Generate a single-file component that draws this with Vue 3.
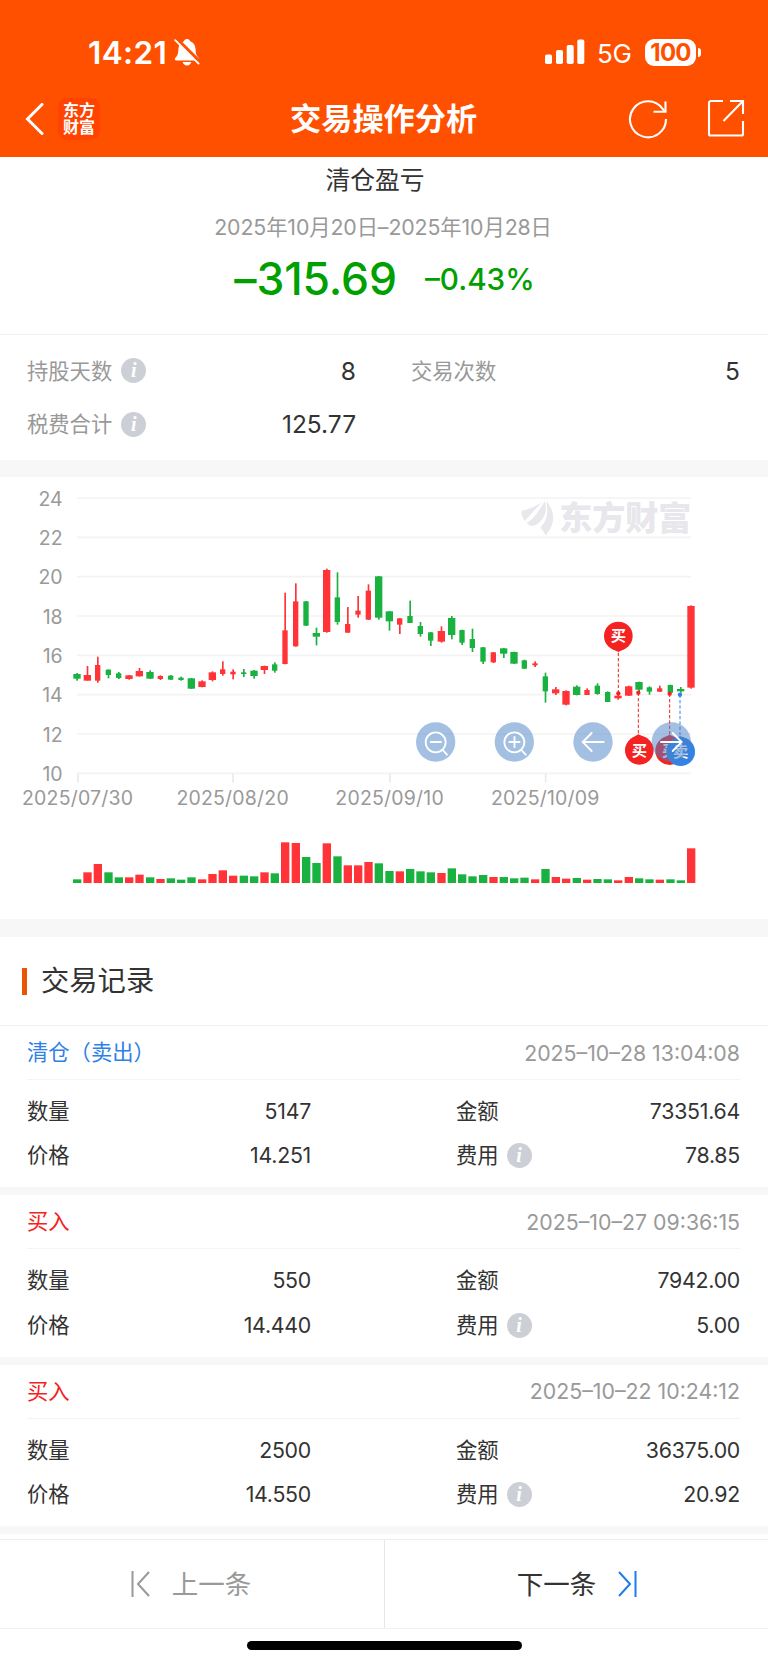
<template>
  <div class="page">
    <header class="header">
      <div class="status">
        <span class="clock">14:21</span>
        <svg class="bell" viewBox="0 0 26 28">
          <path
            d="M13 1c1.9 0 2.8 1 3.1 2.3 3.6 1.2 5.3 4.3 5.5 8.2.2 5 1.4 6.6 3.2 8.4.9 1.2.2 2.6-1.1 2.6H2.3c-1.3 0-2-1.4-1.1-2.6 1.8-1.8 3-3.4 3.2-8.4.2-3.900 1.900-7 5.500-8.200C10.200 2 11.100 1 13 1zM8.700 24h8.600c-.5 2.200-2.200 3.400-4.300 3.400S9.200 26.200 8.700 24z"
            fill="#fff"
          />
          <path d="M2 .6 26 24.400" stroke="#ff5000" stroke-width="4" />
          <path d="M1.200 2.200 24.600 25.600" stroke="#fff" stroke-width="1.900" stroke-linecap="round" />
        </svg>
        <svg class="signal" viewBox="0 0 40 26">
          <rect x="0" y="15.500" width="7" height="9.500" rx="1.800" />
          <rect x="11" y="11" width="7" height="14" rx="1.800" />
          <rect x="21.700" y="6" width="7" height="19" rx="1.800" />
          <rect x="32.300" y="0.500" width="7" height="24.500" rx="1.800" />
        </svg>
        <span class="network">5G</span>
        <span class="battery">100</span>
        <span class="nub"></span>
      </div>
      <div class="navbar">
        <svg class="back" viewBox="0 0 20 32">
          <path d="M17 1.500 2.500 16 17 30.500" />
        </svg>
        <div class="logo"><span>东方</span><span>财富</span></div>
        <h1 class="title">交易操作分析</h1>
        <svg class="refresh" viewBox="0 0 40 40">
          <path d="M38 20A18 18 0 1 1 34.800 10L36.500 12.500" />
          <path d="M37.500 2.500v10.300H25.500" />
        </svg>
        <svg class="share" viewBox="0 0 38 38">
          <path d="M16 2H4a2 2 0 0 0-2 2v31a1.500 1.500 0 0 0 1.500 1.500h31A1.500 1.500 0 0 0 36 35V22" />
          <path d="M23 2h13v13M36 2 16.500 22" />
        </svg>
      </div>
    </header>

    <section class="summary">
      <h2 class="summaryTitle">清仓盈亏</h2>
      <p class="period">2025年10月20日–2025年10月28日</p>
      <div class="profit">
        <span class="amount">–315.69</span>
        <span class="rate">–0.43%</span>
      </div>
    </section>

    <section class="stats">
      <div v-for="s in stats" :key="s.label" class="stat">
        <span class="statLabel">{{ s.label }}</span>
        <i v-if="s.info" class="info">i</i>
        <span class="statValue">{{ s.value }}</span>
      </div>
    </section>

    <section class="chart">
      <svg class="plot" viewBox="0 21 2304 1326">
        <g v-for="n in 8" :key="'y' + n">
          <line class="grid" x1="231" x2="2073" :y1="n * 118 - 34" :y2="n * 118 - 34" />
          <text class="axis" x="188" :y="n * 118 - 11" text-anchor="end">{{ 26 - n * 2 }}</text>
        </g>
        <g v-for="d in dates" :key="d.label">
          <line class="tick" :x1="d.x" :x2="d.x" y1="910" y2="938" />
          <text class="axis date" :x="d.x - 1" y="1006" text-anchor="middle">{{ d.label }}</text>
        </g>

        <g class="watermark">
          <path d="M1565 122c18-2 38-12 60-24-16 14-30 32-50 55-8-8-12-20-10-31z" />
          <path d="M1581 158c20-10 36-36 53-64 8 26 2 50-22 68-12 8-24 8-31-4z" />
          <path d="M1638 94c20 20 26 46 18 70-4 12-12 22-19 33-4-10-9-18-16-24 20-20 26-46 17-79z" />
          <text x="1678" y="181">东方财富</text>
        </g>

        <g v-for="(c, i) in candles" :key="i" :class="c[0] ? 'up' : 'down'">
          <rect :x="center(i) - 2" :y="c[1]" width="5" :height="c[4] - c[1]" />
          <rect
            :x="center(i) - bodyWidth(i) / 2"
            :y="c[2]"
            :width="bodyWidth(i)"
            :height="c[3] - c[2]"
          />
          <rect :x="center(i) - 12" :y="1239 - c[5]" width="25" :height="c[5]" />
        </g>

        <g v-for="p in pins" :key="p.x" :fill="p.color">
          <line :x1="p.x" :x2="p.x" :y1="p.dot" :y2="p.tip" :stroke="p.color" class="lead" />
          <circle :cx="p.x" :cy="p.dot" r="6.500" />
          <circle :cx="p.cx" :cy="p.cy" r="43" />
          <path :d="pointer(p)" />
          <text class="pinText" :x="p.cx" :y="p.cy + 16" text-anchor="middle">{{ p.text }}</text>
        </g>

        <g class="controls">
          <circle v-for="x in [1307, 1543, 1779, 2014]" :key="x" :cx="x" cy="816" r="59" />
          <path d="M1337 817a30 30 0 1 1-60 0a30 30 0 1 1 60 0M1328 840l13 14M1292 816h31" />
          <path d="M1573 817a30 30 0 1 1-60 0a30 30 0 1 1 60 0M1564 840l13 14M1528 816h31M1543.500 801v31" />
          <path d="M1811 816h-62M1775 789l-27 27 27 27" />
          <path d="M1983 816h62M2018 789l27 27-27 27" />
        </g>
      </svg>
    </section>

    <section class="records">
      <h2 class="recordsTitle">交易记录</h2>
      <article v-for="r in records" :key="r.time" class="record">
        <div class="recordHead">
          <span :class="r.sell ? 'sell' : 'buy'">{{ r.type }}</span>
          <time>{{ r.time }}</time>
        </div>
        <div class="recordBody">
          <div class="cell"><span>数量</span><b>{{ r.count }}</b></div>
          <div class="cell"><span>金额</span><b>{{ r.money }}</b></div>
          <div class="cell"><span>价格</span><b>{{ r.price }}</b></div>
          <div class="cell"><span>费用</span><i class="info">i</i><b>{{ r.fee }}</b></div>
        </div>
      </article>
    </section>

    <footer class="pager">
      <button class="prev">
        <svg viewBox="0 0 20 26"><path d="M1.500 0v26M18 1 7 13l11 12" /></svg>
        <span>上一条</span>
      </button>
      <button class="next">
        <span>下一条</span>
        <svg viewBox="0 0 20 26"><path d="M18.500 0v26M2 1l11 12L2 25" /></svg>
      </button>
    </footer>
    <div class="home"><span></span></div>
  </div>
</template>

<script setup>
const stats = [
  { label: "持股天数", value: "8", info: true },
  { label: "交易次数", value: "5" },
  { label: "税费合计", value: "125.77", info: true },
];

const dates = [
  { label: "2025/07/30", x: 234 },
  { label: "2025/08/20", x: 699 },
  { label: "2025/09/10", x: 1170 },
  { label: "2025/10/09", x: 1637 },
];

// [rising, high, body top, body bottom, low, volume]
const candles = [
  [0, 609, 612, 626, 632, 11],
  [1, 588, 615, 632, 632, 32],
  [1, 560, 585, 632, 638, 57],
  [0, 598, 599, 615, 625, 32],
  [0, 606, 610, 624, 627, 17],
  [1, 615, 616, 627, 629, 17],
  [1, 594, 603, 619, 620, 25],
  [0, 601, 606, 626, 627, 17],
  [1, 616, 618, 627, 630, 12],
  [0, 615, 617, 629, 630, 14],
  [0, 620, 623, 630, 632, 10],
  [0, 624, 625, 656, 657, 17],
  [1, 631, 634, 651, 652, 11],
  [1, 604, 607, 630, 634, 27],
  [1, 574, 598, 612, 617, 38],
  [1, 598, 605, 613, 628, 22],
  [0, 597, 607, 612, 621, 22],
  [0, 600, 602, 618, 626, 20],
  [1, 587, 588, 600, 612, 32],
  [0, 577, 583, 602, 608, 29],
  [1, 368, 481, 582, 583, 122],
  [1, 340, 394, 529, 530, 120],
  [0, 393, 394, 467, 468, 78],
  [0, 473, 489, 500, 526, 60],
  [1, 296, 300, 486, 488, 119],
  [0, 307, 382, 456, 464, 80],
  [1, 411, 462, 488, 488, 53],
  [1, 378, 422, 434, 443, 53],
  [1, 343, 362, 449, 450, 63],
  [0, 318, 319, 443, 449, 59],
  [0, 423, 424, 454, 482, 36],
  [1, 444, 445, 464, 492, 35],
  [0, 392, 438, 459, 459, 42],
  [0, 456, 468, 492, 500, 35],
  [0, 486, 487, 512, 528, 32],
  [1, 469, 483, 515, 518, 30],
  [0, 438, 444, 495, 508, 44],
  [0, 479, 480, 518, 525, 26],
  [0, 476, 507, 534, 546, 20],
  [0, 531, 532, 575, 582, 24],
  [1, 546, 547, 577, 579, 18],
  [0, 534, 535, 551, 564, 18],
  [0, 545, 546, 581, 582, 14],
  [0, 569, 571, 596, 597, 16],
  [1, 574, 580, 586, 591, 11],
  [0, 608, 619, 664, 698, 42],
  [1, 651, 658, 670, 675, 18],
  [1, 661, 663, 704, 706, 13],
  [0, 646, 650, 675, 676, 15],
  [1, 655, 660, 675, 675, 10],
  [0, 640, 647, 672, 674, 12],
  [0, 664, 666, 696, 696, 11],
  [1, 668, 677, 685, 689, 8],
  [1, 647, 649, 677, 678, 18],
  [0, 635, 636, 659, 665, 14],
  [0, 649, 652, 665, 674, 11],
  [1, 647, 655, 665, 666, 10],
  [0, 644, 645, 668, 672, 11],
  [0, 651, 657, 664, 668, 8],
  [1, 406, 408, 653, 656, 104],
];

const wide = [
  0, 1, 5, 6, 7, 11, 12, 13, 17, 18, 23, 24, 29, 30, 35, 36, 41, 42, 46, 47, 48, 52, 53, 54, 58, 59,
];

const center = (i) => Math.round(231 + i * 31.22);
const bodyWidth = (i) => (wide.includes(i) ? 22 : 16);

const pins = [
  { x: 1855, dot: 670, tip: 546, cx: 1855, cy: 498, text: "买", color: "#f52222" },
  { x: 1915, dot: 668, tip: 793, cx: 1918, cy: 841, text: "买", color: "#f52222" },
  { x: 2009, dot: 671, tip: 794, cx: 2009, cy: 842, text: "买", color: "#f52222" },
  { x: 2040, dot: 674, tip: 798, cx: 2042, cy: 845, text: "卖", color: "#3482e4" },
];

// small wedge between the round pin and its dashed line
const pointer = (p) => {
  const base = p.cy + (p.tip > p.cy ? 37 : -37);
  return `M${p.cx - 22} ${base}L${p.x} ${p.tip}L${p.cx + 22} ${base}z`;
};

const records = [
  {
    type: "清仓（卖出）",
    sell: true,
    time: "2025–10–28 13:04:08",
    count: "5147",
    money: "73351.64",
    price: "14.251",
    fee: "78.85",
  },
  {
    type: "买入",
    time: "2025–10–27 09:36:15",
    count: "550",
    money: "7942.00",
    price: "14.440",
    fee: "5.00",
  },
  {
    type: "买入",
    time: "2025–10–22 10:24:12",
    count: "2500",
    money: "36375.00",
    price: "14.550",
    fee: "20.92",
  },
];
</script>

<style>
body {
  margin: 0;
  background: #fff;
}
</style>

<style scoped>
.page {
  width: 768px;
  height: 1665px;
  overflow: hidden;
  display: flex;
  flex-direction: column;
  background: #fff;
  color: #333;
  font-family: Inter, "Noto Sans CJK SC", sans-serif;
}

h1,
h2,
p {
  margin: 0;
  font-weight: 400;
}

.header {
  height: 157px;
  flex: none;
  background: #ff5000;
  color: #fff;
}

.status {
  height: 80px;
  padding: 24px 67px 0 88px;
  box-sizing: border-box;
  display: flex;
  align-items: center;
}

.clock {
  width: 86px;
  font-size: 31.500px;
  font-weight: 600;
  line-height: 56px;
  letter-spacing: 0.4px;
  padding-top: 1px;
  white-space: nowrap;
}

.bell {
  width: 26px;
  height: 28px;
}

.signal {
  width: 40px;
  height: 26px;
  margin-left: auto;
  fill: #fff;
}

.network {
  margin-left: 12px;
  padding-top: 2px;
  width: 35px;
  font-size: 26px;
  letter-spacing: -0.3px;
}

.battery {
  margin-left: 13px;
  width: 51px;
  height: 27px;
  border-radius: 9px;
  background: #fff;
  color: #ff5000;
  font-size: 24px;
  font-weight: 700;
  line-height: 27px;
  letter-spacing: -0.8px;
  text-align: center;
}

.nub {
  width: 3px;
  height: 9px;
  margin-left: 2px;
  border-radius: 0 4px 4px 0;
  background: #fff;
}

.navbar {
  height: 77px;
  padding: 0 23px 0 25px;
  display: flex;
  align-items: center;
}

.navbar svg {
  fill: none;
  stroke: #fff;
  stroke-width: 2.100;
}

.navbar .back {
  width: 20px;
  height: 32px;
  stroke-width: 3;
  stroke-linecap: round;
}

.logo {
  margin-left: 13px;
  width: 42px;
  height: 42px;
  border-radius: 9px;
  background: #ff4300;
  display: flex;
  flex-direction: column;
  align-items: center;
  justify-content: center;
  font-size: 16px;
  font-weight: 700;
  line-height: 18px;
}

.logo span {
  margin-top: -1px;
}

.title {
  margin-left: 190px;
  width: 188px;
  font-size: 31.2px;
  font-weight: 600;
  line-height: 44px;
  white-space: nowrap;
}

.refresh {
  width: 40px;
  height: 40px;
  margin-left: 150px;
}

.share {
  width: 38px;
  height: 38px;
  margin-left: auto;
  margin-top: -1px;
}

.summary {
  height: 177px;
  flex: none;
  border-bottom: 1px solid #efefef;
  text-align: center;
}

.summaryTitle {
  padding: 5px 18px 0 0;
  font-size: 24.8px;
  line-height: 37px;
}

.period {
  margin-top: 12px;
  padding-right: 2px;
  font-size: 21.300px;
  line-height: 32px;
  letter-spacing: -0.1px;
  color: #999;
}

.profit {
  display: flex;
  justify-content: center;
  align-items: center;
  gap: 28px;
  margin-top: 10px;
  padding-left: 1px;
  line-height: 52px;
  font-weight: 500;
  color: #00a000;
}

.amount {
  font-size: 44.500px;
  letter-spacing: -0.1px;
}

.rate {
  font-size: 29.700px;
}

.stats {
  height: 124px;
  flex: none;
  padding: 9px 28px 0 27px;
  box-sizing: border-box;
  display: grid;
  grid-template-columns: 329px 329px;
  grid-auto-rows: 53.500px;
  column-gap: 55px;
  margin-bottom: 1px;
}

.stat {
  display: flex;
  align-items: center;
}

.statLabel {
  margin-top: -3px;
  font-size: 21.3px;
  color: #999;
}

.statValue {
  margin-left: auto;
  font-size: 24.5px;
}

.info {
  width: 25px;
  height: 25px;
  margin-left: 9px;
  border-radius: 50%;
  background: #cccfd5;
  color: #fff;
  font: italic 700 20px/25px "Liberation Serif", serif;
  text-align: center;
}

.chart {
  flex: none;
  height: 442px;
  border-top: 17px solid #f7f7f7;
  border-bottom: 18px solid #f7f7f7;
}

.plot {
  display: block;
  width: 768px;
  height: 442px;
}

.grid {
  stroke: #f3f3f4;
  stroke-width: 5;
}

.tick {
  stroke: #eaeaeb;
  stroke-width: 5;
}

.axis {
  font-size: 58.500px;
  fill: #999;
}

.date {
  letter-spacing: 0.6px;
}

.up {
  fill: #ff3338;
}

.down {
  fill: #19b13f;
}

.watermark {
  fill: #e7e7ec;
}

.watermark text {
  font-size: 99px;
  font-weight: 900;
}

.lead {
  stroke-width: 3;
  stroke-dasharray: 10 6;
}

.pinText {
  fill: #fff;
  font-size: 46px;
  font-weight: 600;
}

.controls circle {
  fill: rgba(72, 130, 200, 0.5);
}

.controls path {
  fill: none;
  stroke: #fff;
  stroke-width: 5.500;
  stroke-linecap: round;
}

.records {
  flex: none;
}

.recordsTitle {
  height: 89px;
  box-sizing: border-box;
  display: flex;
  align-items: center;
  font-size: 28.3px;
  line-height: 40px;
  border-bottom: 1px solid #f0f0f0;
}

.recordsTitle::before {
  content: "";
  width: 5px;
  height: 27px;
  margin: 0 14px 0 22px;
  background: #ea5504;
}

.record {
  height: 169.400px;
  box-sizing: border-box;
  border-bottom: 8.500px solid #f7f7f7;
  font-size: 21.3px;
}

.recordHead {
  height: 53px;
  margin: 0 28px 0 27px;
  display: flex;
  align-items: center;
  justify-content: space-between;
  border-bottom: 1px solid #f4f4f4;
}

.recordHead span {
  margin-top: -4px;
}

.recordHead time {
  color: #999;
}

.sell {
  color: #2e80e8;
}

.buy {
  color: #f52222;
}

.recordBody {
  padding: 9px 28px 0 27px;
  display: grid;
  grid-template-columns: 284px 284px;
  grid-auto-rows: 44.500px;
  justify-content: space-between;
}

.cell {
  display: flex;
  align-items: center;
}

.cell span {
  margin-top: -4px;
}

.cell b {
  margin-top: -1px;
  margin-left: auto;
  font-weight: 400;
  letter-spacing: -0.25px;
}

.cell .info {
  margin-left: 8px;
}

.pager {
  height: 90px;
  flex: none;
  box-sizing: border-box;
  margin-top: 5px;
  display: flex;
  border-top: 1.500px solid #ececec;
  border-bottom: 1px solid #f2f2f2;
}

.pager button {
  width: 384px;
  padding: 0;
  border: 0;
  background: none;
  display: flex;
  align-items: center;
  justify-content: center;
  gap: 21px;
  color: #333;
  font: 26.500px Inter, "Noto Sans CJK SC", sans-serif;
}

.pager span {
  margin-top: -3px;
}

.pager .prev {
  padding-right: 2px;
  color: #999;
}

.pager .next {
  padding-left: 1px;
  border-left: 1px solid #e6e6e6;
}

.pager svg {
  width: 20px;
  height: 26px;
  fill: none;
  stroke: currentColor;
  stroke-width: 2;
}

.next svg {
  color: #1e7bf0;
}

.home {
  flex: 1;
  display: flex;
  justify-content: center;
  padding-top: 12px;
}

.home span {
  width: 275px;
  height: 9px;
  border-radius: 5px;
  background: #000;
}
</style>
